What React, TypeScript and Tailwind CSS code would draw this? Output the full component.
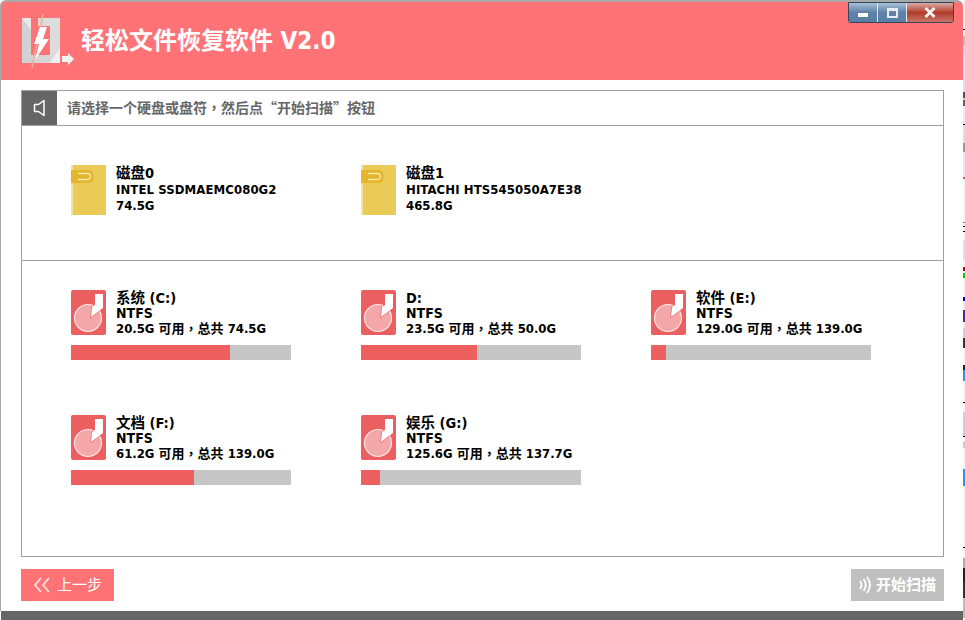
import React from "react";

const FONT = '"DejaVu Sans Condensed", "Liberation Sans", "Noto Sans CJK SC", sans-serif';

const STRIP: [number, string][] = [
  [29, "#f2f2f2"], [1, "#000000"], [6, "#f5f5f5"], [9, "#bbbbbb"], [10, "#c8d8e8"], [37, "#d8e4f2"],
  [6, "#555555"], [2, "#cccccc"], [6, "#666666"], [18, "#e8ecf4"], [1, "#000000"], [18, "#dddddd"],
  [9, "#999999"], [25, "#dde6f2"], [2, "#e0506a"], [43, "#f4f4f4"], [1, "#e0506a"], [3, "#f4f4f4"],
  [1, "#000000"], [4, "#f4f4f4"], [1, "#000000"], [8, "#f4f4f4"], [20, "#d8e0ee"], [7, "#f4f4f4"],
  [4, "#bb0000"], [2, "#f4f4f4"], [5, "#00cc00"], [19, "#f4f4f4"], [4, "#0000cc"], [9, "#e8e8f0"],
  [12, "#4030a0"], [6, "#eeeeee"], [10, "#ccccdd"], [10, "#333333"], [17, "#f4f4f4"], [5, "#222222"],
  [11, "#3090f0"], [21, "#f4f4f4"], [1, "#000000"], [9, "#f4f4f4"], [24, "#c8d0da"], [1, "#000000"],
  [5, "#f4f4f4"], [6, "#cccccc"], [21, "#f4f4f4"], [17, "#3090f0"], [61, "#f4f4f4"], [1, "#000000"],
  [10, "#f4f4f4"], [10, "#aaaaaa"], [14, "#222222"], [16, "#333333"], [20, "#bbbbbb"],
];

function DiskIcon() {
  return (
    <svg width="35" height="50" viewBox="0 0 35 50" className="shrink-0">
      <rect width="35" height="50" fill="#ebcb57" />
      <rect width="2" height="50" fill="#f3e2a0" />
      <path d="M0 5H17Q22.500 5 22.500 10V13Q22.500 18 17 18H0Z" fill="#e5b52c" />
      <path d="M7 8.500H16Q19.500 8.500 19.500 11.500Q19.500 14.500 16 14.500H7" fill="none" stroke="#f8eaa8" strokeWidth="1.300" />
    </svg>
  );
}

function VolumeIcon() {
  return (
    <svg width="35" height="45" viewBox="0 0 35 45" className="shrink-0">
      <rect width="35" height="45" rx="2" fill="#eb5f60" />
      <circle cx="17" cy="28" r="13.500" fill="#f4a7a8" stroke="#fbe3e3" strokeWidth="1.200" />
      <path d="M24 4H32V18L20 27L21 17L24 15Z" fill="#ffffff" stroke="#eb5f60" strokeWidth="1.200" paintOrder="stroke" />
    </svg>
  );
}

function Logo() {
  return (
    <svg width="52" height="55" viewBox="22 14 52 55" className="shrink-0">
      <path d="M22 18H31V63H22Z" fill="#d2d2d2" />
      <path d="M22 18H31V30Z" fill="#e8e8e8" />
      <path d="M31 55H50V63H31Z" fill="#d6d6d6" />
      <path d="M38 18H60V63H50V26H38Z" fill="#dcdcdc" />
      <path d="M50 63L60 48V63Z" fill="#f0f0f0" />
      <path d="M43 14L32 68" stroke="#ffab8f" strokeWidth="1.500" />
      <path d="M40 27H47L43 39H49L35 60L39 44H34Z" fill="#ffffff" />
      <path d="M62 56H68V53L74 59L68 65V62H62Z" fill="#f5f5f5" />
    </svg>
  );
}

function Comma() {
  return <span className="[font-family:'Noto_Sans_CJK_TC',sans-serif]">，</span>;
}

function Disk({ name, model, size }: { name: string; model: string; size: string }) {
  return (
    <div className="flex w-[220px] gap-2.5 overflow-hidden">
      <DiskIcon />
      <div className="min-w-0 text-[13px] leading-[16.500px] font-bold whitespace-nowrap text-black">
        <div className="text-[14.500px]">{name}</div>
        <div className="tracking-[0.1px]">{model}</div>
        <div>{size}</div>
      </div>
    </div>
  );
}

function Volume({ name, free, total, pct }: { name: string; free: string; total: string; pct: number }) {
  return (
    <div className="w-[220px]">
      <div className="flex h-[45px] gap-2.5">
        <VolumeIcon />
        <div className="pt-[1px] text-[13px] leading-[15px] font-bold whitespace-nowrap text-black">
          <div className="text-[14.500px]">{name}</div>
          <div className="text-[14px]">NTFS</div>
          <div className="-mt-[1px]">
            {free} 可用<Comma />总共 {total}
          </div>
        </div>
      </div>
      <div className="mt-[10px] h-[15px] bg-[#c6c6c6]">
        <div className="h-full bg-[#ee6060]" style={{ width: `${pct}%` }} />
      </div>
    </div>
  );
}

function WinControls() {
  return (
    <div className="absolute top-0 right-[9px] flex h-[21px] w-[106px] overflow-hidden rounded-b-[3px] border border-[#34465c]">
      <div className="flex w-[29px] items-center justify-center border-r border-[#dfe8f0] bg-gradient-to-b from-[#a9c0d8] via-[#5f82a6] to-[#5a7fa5]">
        <div className="mt-[5px] h-[4px] w-[10px] bg-white" />
      </div>
      <div className="flex w-[29px] items-center justify-center border-r border-[#dfe8f0] bg-gradient-to-b from-[#a9c0d8] via-[#5f82a6] to-[#5a7fa5]">
        <div className="h-[10px] w-[11px] border-[2px] border-t-[3px] border-[#e8edf2]" />
      </div>
      <div className="flex flex-1 items-center justify-center bg-gradient-to-b from-[#d8aca6] via-[#b03a28] to-[#c87468]">
        <svg width="12" height="11" viewBox="0 0 12 11">
          <path d="M1.500 1L10.500 10M10.500 1L1.500 10" stroke="#f4f4f4" strokeWidth="2.800" />
        </svg>
      </div>
    </div>
  );
}

export default function App() {
  return (
    <div className="flex h-[620px] w-[965px] overflow-hidden bg-white" style={{ fontFamily: FONT }}>
      <div className="flex w-[963px] shrink-0 flex-col">
        <div className="relative flex h-[80px] shrink-0 items-center overflow-hidden rounded-t-[6px] border-t-2 border-l border-t-[#a8a8a8] border-l-[#a8a8a8] bg-[#ff7377] pl-[21px]">
          <Logo />
          <h1 className="ml-[7px] text-[24px] leading-none font-bold text-white">轻松文件恢复软件 V2.0</h1>
          <WinControls />
        </div>
        <div className="flex min-h-0 flex-1 flex-col border-l border-[#a8a8a8] pt-[10px] pr-[19px] pl-[20px]">
          <div className="flex h-[467px] flex-col border border-[#a0a0a0]">
            <div className="flex h-[35px] shrink-0 items-stretch border-b border-[#a0a0a0]">
              <div className="flex w-[35px] items-center justify-center bg-[#666666]">
                <svg width="13" height="18" viewBox="0 0 13 18">
                  <path d="M11 1.500V16.500L5.500 12.500H1.500V5.500H5.500Z" fill="none" stroke="#ffffff" strokeWidth="1.500" strokeLinejoin="round" />
                </svg>
              </div>
              <div className="flex items-center pb-[2px] pl-[10px] text-[14px] font-bold text-[#666666] [font-family:'Noto_Sans_CJK_SC',sans-serif]">
                请选择一个硬盘或盘符<Comma />然后点“开始扫描”按钮
              </div>
            </div>
            <div className="flex h-[135px] shrink-0 gap-[70px] border-b border-[#a0a0a0] pt-[39px] pl-[49px]">
              <Disk name="磁盘0" model="INTEL SSDMAEMC080G2" size="74.5G" />
              <Disk name="磁盘1" model="HITACHI HTS545050A7E380" size="465.8G" />
            </div>
            <div className="grid grid-cols-[220px_220px_220px] gap-x-[70px] gap-y-[55px] pt-[29px] pl-[49px]">
              <Volume name="系统 (C:)" free="20.5G" total="74.5G" pct={72.3} />
              <Volume name="D:" free="23.5G" total="50.0G" pct={52.7} />
              <Volume name="软件 (E:)" free="129.0G" total="139.0G" pct={6.8} />
              <Volume name="文档 (F:)" free="61.2G" total="139.0G" pct={55.9} />
              <Volume name="娱乐 (G:)" free="125.6G" total="137.7G" pct={8.6} />
            </div>
          </div>
          <div className="mt-[12px] flex items-start justify-between">
            <div className="flex h-[32px] w-[93px] items-center gap-[6px] bg-[#ff7377] pl-[12px] text-[15px] text-white">
              <svg width="18" height="16" viewBox="0 0 18 16">
                <path d="M8 1L2 8L8 15M16 1L10 8L16 15" fill="none" stroke="#ffe0e0" strokeWidth="1.800" />
              </svg>
              <span>上一步</span>
            </div>
            <div className="flex h-[32px] w-[93px] items-center gap-[4px] bg-[#c0c0c0] pl-[7px] text-[15px] font-bold text-white">
              <svg width="14" height="20" viewBox="0 0 14 20">
                <path d="M2 6Q5 10 2 14M5.500 4Q10 10 5.500 16M9 2Q15 10 9 18" fill="none" stroke="#ffffff" strokeWidth="1.800" />
              </svg>
              <span>开始扫描</span>
            </div>
          </div>
        </div>
        <div className="ml-[1px] h-[9px] shrink-0 bg-[#666666]" />
      </div>
      <div className="flex w-[2px] shrink-0 flex-col">
        {STRIP.map(([h, c], i) => (
          <div key={i} className="w-full shrink-0" style={{ height: h, backgroundColor: c }} />
        ))}
      </div>
    </div>
  );
}
